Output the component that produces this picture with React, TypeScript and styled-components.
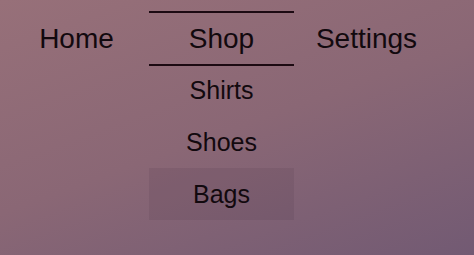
import styled, { createGlobalStyle } from 'styled-components';

const GlobalStyle = createGlobalStyle`
  html, body {
    margin: 0;
    padding: 0;
  }
  body {
    font-family: 'Liberation Sans', Arial, sans-serif;
  }
`;

const Page = styled.div`
  min-height: 100vh;
  width: 100%;
  background: linear-gradient(160deg, #977079 0%, #8a6775 50%, #725a73 100%);
  color: #12090e;
`;

const Nav = styled.nav`
  display: flex;
  align-items: flex-start;
  padding: 11px 0 0 4px;
`;

const NavItem = styled.div<{ $active?: boolean }>`
  position: relative;
  width: 145px;
  box-sizing: border-box;
  text-align: center;
  font-size: 28px;
  line-height: 51px;
  border-top: 2px solid ${(p) => (p.$active ? '#1c0a12' : 'transparent')};
  border-bottom: 2px solid ${(p) => (p.$active ? '#1c0a12' : 'transparent')};
  cursor: pointer;
`;

const SubMenu = styled.ul`
  position: absolute;
  top: 100%;
  left: 0;
  right: 0;
  margin: 0;
  padding: 0;
  list-style: none;
`;

const SubItem = styled.li<{ $hover?: boolean }>`
  height: 52px;
  line-height: 52px;
  font-size: 25px;
  text-align: center;
  background: ${(p) => (p.$hover ? 'rgba(40, 20, 40, 0.09)' : 'transparent')};
`;

const shopItems = ['Shirts', 'Shoes', 'Bags'];

export default function App() {
  return (
    <>
      <GlobalStyle />
      <Page>
        <Nav>
          <NavItem>Home</NavItem>
          <NavItem $active>
            Shop
            <SubMenu>
              {shopItems.map((item) => (
                <SubItem key={item} $hover={item === 'Bags'}>
                  {item}
                </SubItem>
              ))}
            </SubMenu>
          </NavItem>
          <NavItem>Settings</NavItem>
        </Nav>
      </Page>
    </>
  );
}
